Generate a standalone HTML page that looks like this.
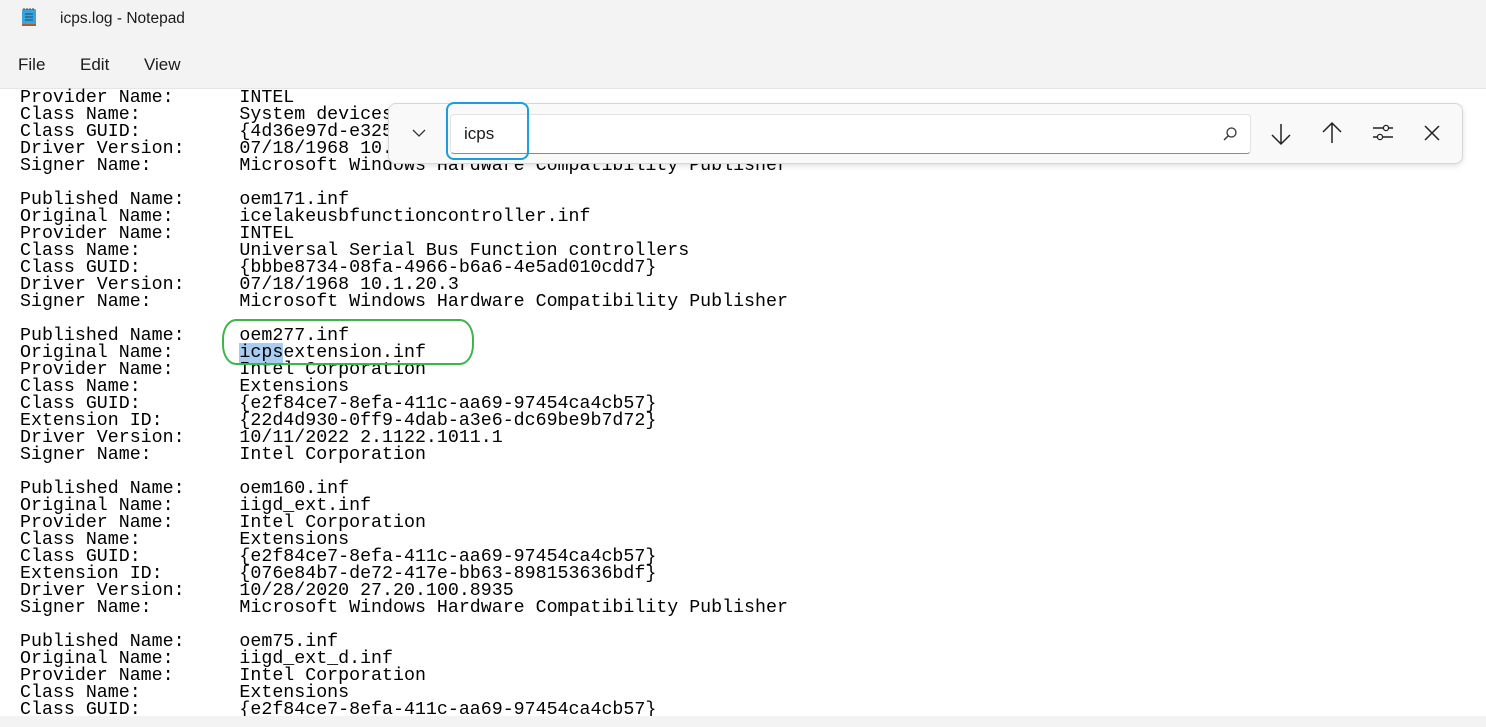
<!DOCTYPE html>
<html><head><style>
body{margin:0;width:1486px;height:727px;overflow:hidden;background:#fff;font-family:"Liberation Sans",sans-serif;position:relative}
.title{position:absolute;left:0;top:0;width:1486px;height:88px;background:#f3f3f3;border-bottom:1px solid #e5e5e5}
.title .t{position:absolute;left:60px;top:10px;font-size:15.5px;color:#1a1a1a}
.menu{position:absolute;top:55px;font-size:17px;color:#1a1a1a}
pre{position:absolute;left:20px;top:90px;margin:0;font-family:"Liberation Mono",monospace;font-size:18.3px;line-height:17px;color:#000;letter-spacing:0}
.hl{background:#a8cdf0}
.find{position:absolute;left:388px;top:103px;width:1073px;height:59px;background:#f9f9f9;border:1px solid #d6d6d6;border-radius:8px;box-shadow:0 2px 6px rgba(0,0,0,.12)}
.inp{position:absolute;left:450px;top:114px;width:799px;height:38px;background:#fff;border:1px solid #e3e3e3;border-bottom:1px solid #8a8a8a;border-radius:4px}
.inp span{position:absolute;left:13px;top:9px;font-size:17px;color:#1a1a1a}
.blue{position:absolute;left:446px;top:102px;width:79px;height:54px;border:2px solid #1a9ee0;border-radius:8px}
.green{position:absolute;left:222px;top:319px;width:248px;height:42px;border:2px solid #3cb54a;border-radius:14px/20px}
.bot{position:absolute;left:0;top:716px;width:1486px;height:11px;background:#f3f3f3}
</style></head><body>
<div class="title">
<svg style="position:absolute;left:21px;top:7px" width="16" height="20" viewBox="0 0 16 20"><rect x="1" y="2" width="14" height="16" rx="1.5" fill="#3aa3db"/><rect x="1" y="17" width="14" height="2" fill="#b05a2a"/><path d="M4 7h8M4 10h8M4 13h8" stroke="#1a5f8a" stroke-width="1.3"/><path d="M3 1v2M6 1v2M9 1v2M12 1v2" stroke="#444" stroke-width="1"/></svg>
<div class="t">icps.log - Notepad</div>
<div class="menu" style="left:18px">File</div>
<div class="menu" style="left:80px">Edit</div>
<div class="menu" style="left:144px">View</div>
</div>
<pre>Provider Name:      INTEL
Class Name:         System devices
Class GUID:         {4d36e97d-e325-11ce-bfc1-08002be10318}
Driver Version:     07/18/1968 10.1.20.3
Signer Name:        Microsoft Windows Hardware Compatibility Publisher

Published Name:     oem171.inf
Original Name:      icelakeusbfunctioncontroller.inf
Provider Name:      INTEL
Class Name:         Universal Serial Bus Function controllers
Class GUID:         {bbbe8734-08fa-4966-b6a6-4e5ad010cdd7}
Driver Version:     07/18/1968 10.1.20.3
Signer Name:        Microsoft Windows Hardware Compatibility Publisher

Published Name:     oem277.inf
Original Name:      <span class="hl">icps</span>extension.inf
Provider Name:      Intel Corporation
Class Name:         Extensions
Class GUID:         {e2f84ce7-8efa-411c-aa69-97454ca4cb57}
Extension ID:       {22d4d930-0ff9-4dab-a3e6-dc69be9b7d72}
Driver Version:     10/11/2022 2.1122.1011.1
Signer Name:        Intel Corporation

Published Name:     oem160.inf
Original Name:      iigd_ext.inf
Provider Name:      Intel Corporation
Class Name:         Extensions
Class GUID:         {e2f84ce7-8efa-411c-aa69-97454ca4cb57}
Extension ID:       {076e84b7-de72-417e-bb63-898153636bdf}
Driver Version:     10/28/2020 27.20.100.8935
Signer Name:        Microsoft Windows Hardware Compatibility Publisher

Published Name:     oem75.inf
Original Name:      iigd_ext_d.inf
Provider Name:      Intel Corporation
Class Name:         Extensions
Class GUID:         {e2f84ce7-8efa-411c-aa69-97454ca4cb57}</pre>
<div class="green"></div>
<div class="find"></div>
<svg style="position:absolute;left:411px;top:128px" width="16" height="10" viewBox="0 0 16 10"><path d="M2 2l6 6 6-6" stroke="#333" stroke-width="1.3" fill="none"/></svg>
<div class="inp"><span>icps</span>
<svg style="position:absolute;right:12px;top:11px" width="16" height="16" viewBox="0 0 16 16"><circle cx="9.5" cy="6.5" r="4.5" stroke="#333" stroke-width="1.3" fill="none"/><path d="M6.3 9.7L2 14" stroke="#333" stroke-width="1.4"/></svg>
</div>
<div class="blue"></div>
<svg style="position:absolute;left:1270px;top:122px" width="22" height="24" viewBox="0 0 22 24"><path d="M11 2v20M2 13l9 9 9-9" stroke="#222" stroke-width="1.5" fill="none"/></svg>
<svg style="position:absolute;left:1321px;top:121px" width="22" height="24" viewBox="0 0 22 24"><path d="M11 22V2M2 11l9-9 9 9" stroke="#222" stroke-width="1.5" fill="none"/></svg>
<svg style="position:absolute;left:1372px;top:123px" width="22" height="20" viewBox="0 0 22 20"><path d="M1 5h20M1 14h20" stroke="#222" stroke-width="1.4"/><circle cx="14" cy="5" r="2.6" fill="#f9f9f9" stroke="#222" stroke-width="1.3"/><circle cx="8" cy="14" r="2.6" fill="#f9f9f9" stroke="#222" stroke-width="1.3"/></svg>
<svg style="position:absolute;left:1424px;top:125px" width="16" height="16" viewBox="0 0 16 16"><path d="M1 1l14 14M15 1L1 15" stroke="#222" stroke-width="1.5"/></svg>
<div class="bot"></div>
</body></html>
